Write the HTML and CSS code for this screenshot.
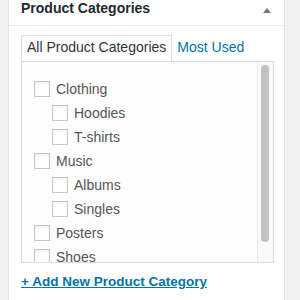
FILE: index.html
```html
<!DOCTYPE html>
<html lang="en">
<head>
  <meta charset="UTF-8" />
  <meta name="viewport" content="width=device-width, initial-scale=1.0"/>
  <title>Product Categories</title>
  <link rel="stylesheet" href="styles.css">
</head>
<body>
  <div class="postbox">
    <div class="postbox-header">
      <h2>Product Categories</h2>
      <span class="toggle-arrow"></span>
    </div>

    <div class="inside">
      <ul class="category-tabs">
        <li class="tabs">All Product Categories</li>
        <li><a href="#">Most Used</a></li>
      </ul>

      <div class="tabs-panel">
        <ul class="checklist">
          <li><label><input type="checkbox"> Clothing</label>
            <ul class="children">
              <li><label><input type="checkbox"> Hoodies</label></li>
              <li><label><input type="checkbox"> T-shirts</label></li>
            </ul>
          </li>
          <li><label><input type="checkbox"> Music</label>
            <ul class="children">
              <li><label><input type="checkbox"> Albums</label></li>
              <li><label><input type="checkbox"> Singles</label></li>
            </ul>
          </li>
          <li><label><input type="checkbox"> Posters</label></li>
          <li><label><input type="checkbox"> Shoes</label></li>
        </ul>
        <div class="scrollbar"><div class="scroll-thumb"></div></div>
      </div>

      <p class="add-new"><a href="#">+ Add New Product Category</a></p>
    </div>
  </div>
</body>
</html>
```

FILE: styles.css
```css
html {
  overflow: hidden;
}

body {
  margin: 0;
  background-color: #f1f1f1;
  font-family: "Liberation Sans", Arial, sans-serif;
  font-size: 14px;
  color: #444;
}

.postbox {
  box-sizing: border-box;
  width: 277px;
  height: 100vh;
  margin-left: 8px;
  background-color: #fff;
  border-left: 1px solid #e5e5e5;
  border-right: 1px solid #e5e5e5;
}

.postbox-header {
  display: flex;
  justify-content: space-between;
  align-items: flex-start;
  height: 25px;
  padding: 0 13px 0 12px;
  border-bottom: 1px solid #eee;
}

.postbox-header h2 {
  margin: 0;
  font-size: 14px;
  line-height: 16px;
  font-weight: bold;
  color: #23282d;
}

.toggle-arrow {
  width: 0;
  height: 0;
  margin-top: 8px;
  border-left: 4px solid transparent;
  border-right: 4px solid transparent;
  border-bottom: 5px solid #72777c;
}

.inside {
  padding: 0 10px 0 12px;
}

.category-tabs {
  display: flex;
  margin: 9px 0 0;
  padding: 0;
  list-style: none;
}

.category-tabs li {
  padding: 1px 5px 3px 4px;
  line-height: 20px;
  border: 1px solid transparent;
}

.category-tabs li.tabs {
  position: relative;
  padding-left: 5px;
  margin-bottom: -1px;
  color: #32373c;
  background-color: #fdfdfd;
  border-color: #ddd;
  border-bottom-color: #fdfdfd;
}

.category-tabs a {
  color: #0073aa;
  text-decoration: none;
}

.tabs-panel {
  position: relative;
  box-sizing: border-box;
  height: 202px;
  overflow: hidden;
  background-color: #fdfdfd;
  border: 1px solid #ddd;
}

.scrollbar {
  position: absolute;
  top: 0;
  right: 0;
  bottom: 0;
  width: 15px;
  background-color: #fafafa;
  border-left: 1px solid #e8e8e8;
}

.scroll-thumb {
  margin: 3px 0 0 3px;
  width: 8px;
  height: 177px;
  border-radius: 4px;
  background-color: #c1c1c1;
}

.checklist {
  margin: 0;
  padding: 15px 12px 12px;
  list-style: none;
}

.checklist ul {
  margin: 0;
  padding: 0 0 0 18px;
  list-style: none;
}

.checklist label {
  display: flex;
  align-items: center;
  gap: 6px;
  height: 24px;
  line-height: 24px;
  color: #555;
}

.checklist input[type="checkbox"] {
  appearance: none;
  box-sizing: border-box;
  width: 16px;
  height: 16px;
  margin: 0;
  background-color: #fff;
  border: 1px solid #c3c6c9;
  box-shadow: inset 0 1px 2px rgba(0, 0, 0, 0.07);
}

.add-new {
  margin: 8px 0 0;
  line-height: 20px;
}

.add-new a {
  font-size: 13.5px;
  font-weight: bold;
  color: #0073aa;
  text-decoration: underline;
}
```
